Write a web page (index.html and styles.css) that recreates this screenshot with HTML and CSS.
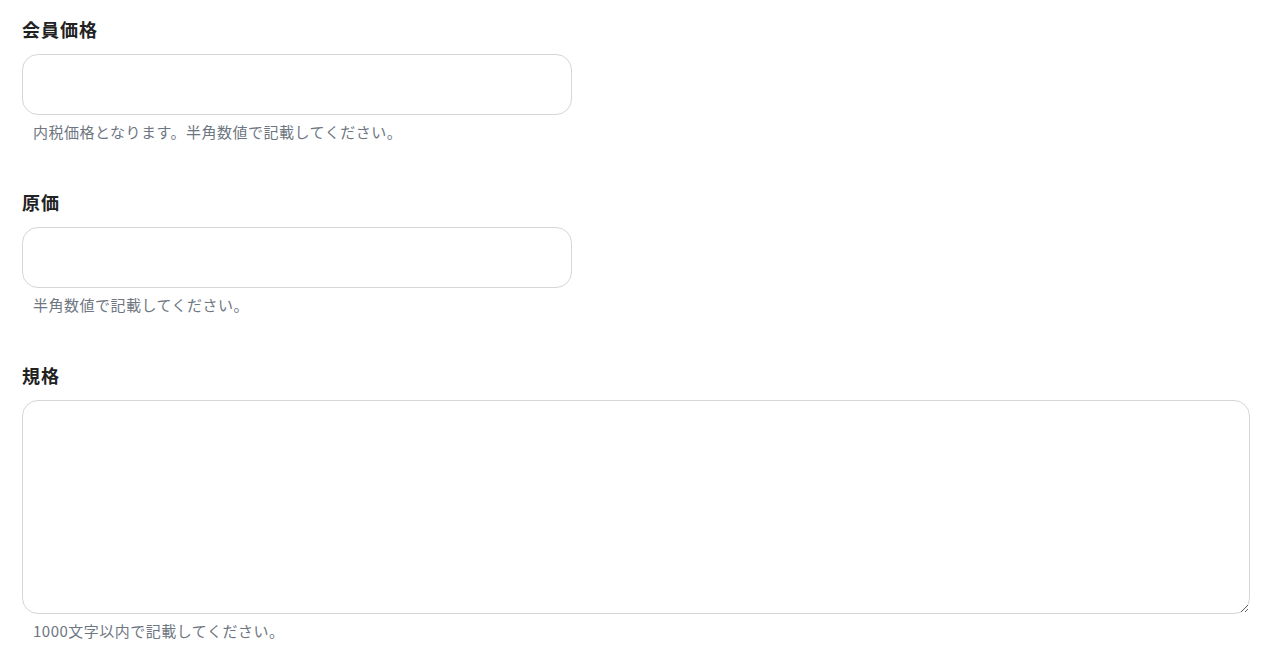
FILE: index.html
```html
<!DOCTYPE html>
<html lang="ja">
<head>
<meta charset="utf-8">
<link rel="stylesheet" href="styles.css">
</head>
<body>
<form class="form">
  <div class="field">
    <label class="label">会員価格</label>
    <input class="input" type="text">
    <p class="hint">内税価格となります。半角数値で記載してください。</p>
  </div>
  <div class="field">
    <label class="label">原価</label>
    <input class="input" type="text">
    <p class="hint">半角数値で記載してください。</p>
  </div>
  <div class="field">
    <label class="label">規格</label>
    <textarea class="textarea"></textarea>
    <p class="hint">1000文字以内で記載してください。</p>
  </div>
</form>
</body>
</html>
```

FILE: styles.css
```css
html, body {
  margin: 0;
  padding: 0;
  background: #ffffff;
}
body {
  font-family: "Noto Sans CJK JP", "Noto Sans", sans-serif;
  color: #222222;
}
.form {
  display: flex;
  flex-direction: column;
  gap: 46px;
  padding: 16px 21px 0 22px;
}
.field {
  display: flex;
  flex-direction: column;
  align-items: flex-start;
}
.label {
  display: block;
  font-size: 18px;
  line-height: 26px;
  font-weight: 700;
  letter-spacing: 1px;
  color: #222222;
  margin-bottom: 12px;
}
.input, .textarea {
  box-sizing: border-box;
  border: 1px solid #d4d6da;
  border-radius: 16px;
  background: #fff;
  font: inherit;
  margin: 0;
  outline: none;
}
.input {
  width: 550px;
  height: 61px;
}
.textarea {
  width: 100%;
  height: 214px;
  resize: vertical;
}
.hint {
  margin: 6px 0 0 11px;
  font-size: 15px;
  line-height: 22px;
  letter-spacing: 0.5px;
  color: #6e7681;
}
```
